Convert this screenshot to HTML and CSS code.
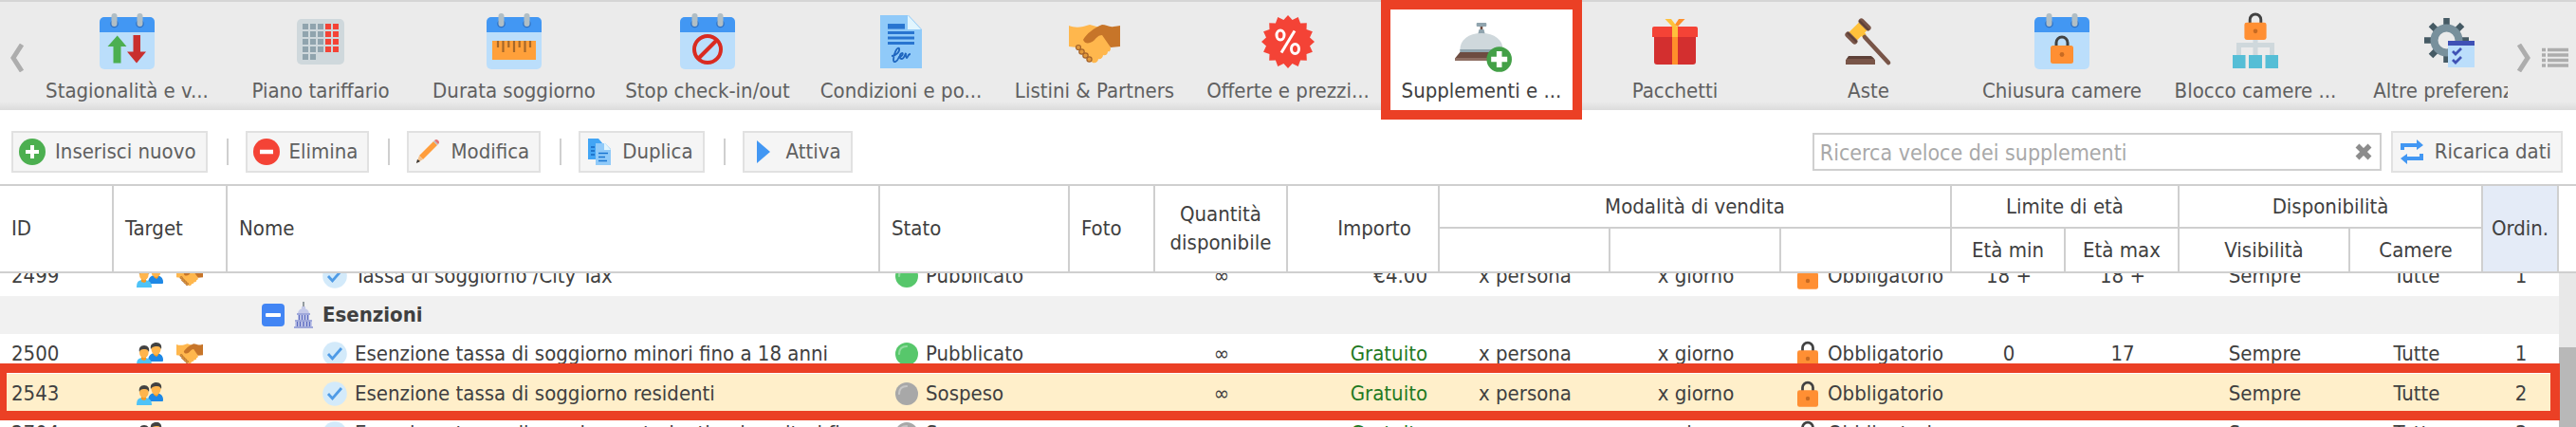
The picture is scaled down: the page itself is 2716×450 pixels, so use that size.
FILE: index.html
```
<!DOCTYPE html>
<html lang="it">

<head>
    <meta charset="utf-8" />
    <title>Supplementi e tasse</title>
    <link rel="stylesheet" href="styles.css">
</head>

<body>
    <!-- icone condivise -->
    <svg class="sprite" aria-hidden="true">
        <symbol id="i-calendar" viewBox="0 0 64 64">
            <rect x="3" y="6" width="58" height="55" rx="5" fill="#bbdefb" />
            <path d="M3 22V11a5 5 0 0 1 5-5h48a5 5 0 0 1 5 5v11z" fill="#4297f3" />
            <circle cx="18.500" cy="13" r="4.300" fill="#2f72c4" />
            <circle cx="45.500" cy="13" r="4.300" fill="#2f72c4" />
            <rect x="15.500" y="2" width="6" height="14" rx="3" fill="#b0bec5" />
            <rect x="42.500" y="2" width="6" height="14" rx="3" fill="#b0bec5" />
        </symbol>
        <symbol id="i-lock" viewBox="0 0 24 30">
            <path d="M6 13V8a6 6 0 0 1 12 0v5" fill="none" stroke="#424242" stroke-width="3" />
            <rect x="0" y="11" width="24" height="19" rx="2.500" fill="#ff8f33" />
            <circle cx="12" cy="20.500" r="2.400" fill="#c76a22" />
        </symbol>
        <symbol id="i-hands" viewBox="0 0 54 41">
            <path d="M0 1c5 2 10 2 15 1l7-2 18 5 4 20c0 3-2 4-3 3 0 4-3 5-5 4 0 3-3 5-5 4 0 3-3 5-6 4L8 24 0 23z" fill="#ffb74d" />
            <path d="M15 16C18 10 27 3 35 0c4 0 8 3 12 2 3 0 5-1 7-1v22l-10 1-9-13c-4 0-6 3-9 6-4 3-9 4-11-1z" fill="#c77529" />
            <g fill="#e39a3b" stroke="#a5632a" stroke-width="1.200">
                <circle cx="10" cy="24" r="2.500" />
                <circle cx="13.500" cy="28.500" r="2.700" />
                <circle cx="17.500" cy="32.500" r="2.700" />
                <circle cx="21.500" cy="36.500" r="2.600" />
            </g>
        </symbol>
        <symbol id="i-people" viewBox="0 0 28 24">
            <path d="M12 20c0-6 3-9 8-9 5 0 8 3 8 7v1c0 1-1 1-2 1z" fill="#1e88e5" />
            <path d="M18 10h5v3l-2 2-3-2z" fill="#f59a23" />
            <ellipse cx="20.500" cy="7" rx="5" ry="6" fill="#ffb54d" />
            <path d="M15 7c-1-5 2-7 6-7 4 0 6 3 5 7-1-2-2-3-4-3-3 0-5 0-7 3z" fill="#424242" />
            <path d="M0 24c0-6 2-8 7-8 6 0 9 2 9 8z" fill="#4fc3f7" />
            <path d="M5 14h5v4l-2 1-3-1z" fill="#f59a23" />
            <ellipse cx="7.800" cy="10.500" rx="4.800" ry="5.800" fill="#ffb54d" />
            <path d="M3 10c-1-4 1-7 5-7 4 0 6 3 5 7-1-2-2-3-4-3-3 0-5 0-6 3z" fill="#424242" />
        </symbol>
        <symbol id="i-check" viewBox="0 0 26 26">
            <circle cx="13" cy="13" r="12.800" fill="#d3eafa" />
            <path d="M6 13l4.500 5L20 7" fill="none" stroke="#4f9be6" stroke-width="2.800" />
        </symbol>
        <symbol id="i-ball" viewBox="0 0 24 24">
            <circle cx="12" cy="12" r="12" fill="currentColor" />
            <path d="M4 12c0-5 3-8 8-8" fill="none" stroke="#fff" stroke-opacity=".35" stroke-width="2.200" stroke-linecap="round" />
        </symbol>
    </svg>

    <nav class="tabs">
        <button class="tabs-arrow tabs-prev" aria-label="Indietro">
            <svg width="16" height="30" viewBox="0 0 16 30"><path d="M13 1L4 15l9 14" fill="none" stroke="#adadad" stroke-width="5" /></svg>
        </button>
        <div class="tabs-list">
            <a class="tab" href="#">
                <svg class="tab-icon" viewBox="0 0 64 64">
                    <use href="#i-calendar" />
                    <path d="M21.700 25.500L31.500 37h-6v17.500h-8V37h-6z" fill="#4caf50" />
                    <path d="M38.500 25H46v17.500h6L42 54.500l-10-12h6.500z" fill="#c92f2f" />
                </svg>
                <span>Stagionalità e v...</span>
            </a>
            <a class="tab" href="#">
                <svg class="tab-icon" viewBox="0 0 64 64">
                    <rect x="7" y="8" width="50" height="48" rx="5" fill="#cfd8dc" />
                    <path d="M13 16h24M13 24h24M13 32h24M13 40h24M13 48h14" stroke="#90a4ae" stroke-width="6" stroke-dasharray="6 2" />
                    <path d="M37 16h14M37 24h14M37 32h14M37 40h14" stroke="#f44336" stroke-width="6" stroke-dasharray="6 2" />
                </svg>
                <span>Piano tariffario</span>
            </a>
            <a class="tab" href="#">
                <svg class="tab-icon" viewBox="0 0 64 64">
                    <use href="#i-calendar" />
                    <rect x="9" y="31" width="46" height="20" fill="#ffa03a" />
                    <path d="M15 31v7M26.300 31v7M37.700 31v7M49 31v7M20.500 31v12M32 31v12M43.500 31v12" stroke="#a5682a" stroke-width="2.200" />
                </svg>
                <span>Durata soggiorno</span>
            </a>
            <a class="tab" href="#">
                <svg class="tab-icon" viewBox="0 0 64 64">
                    <use href="#i-calendar" />
                    <circle cx="32" cy="40" r="14" fill="none" stroke="#d92b21" stroke-width="4" />
                    <path d="M22 50l20-20" stroke="#d92b21" stroke-width="4" />
                </svg>
                <span>Stop check-in/out</span>
            </a>
            <a class="tab" href="#">
                <svg class="tab-icon" viewBox="0 0 64 64">
                    <path d="M10 4h30l14 15v41H10z" fill="#90caf9" />
                    <path d="M39 4l14 15H39z" fill="#e1f5fe" />
                    <path d="M18 15.800h18" stroke="#2874d0" stroke-width="5.500" />
                    <path d="M18 22.500h28M18 28h28M18 33.500h28" stroke="#2874d0" stroke-width="2.800" />
                    <path d="M22 47c5 0 9-5 8-8-2-2-6 6-6 12 0 4 4 2 6-3 3 0 5-4 3-4-3 1-3 6 0 6 2 0 3-4 4-6 0 3 0 5 1 5s1-4 4-4" fill="none" stroke="#1f66bf" stroke-width="1.800" />
                </svg>
                <span>Condizioni e po...</span>
            </a>
            <a class="tab" href="#">
                <svg class="tab-icon" viewBox="0 0 64 64"><use href="#i-hands" x="5" y="14" width="54" height="41" /></svg>
                <span>Listini &amp; Partners</span>
            </a>
            <a class="tab" href="#">
                <svg class="tab-icon" viewBox="0 0 64 64">
                    <path fill="#f44336" d="M32 4L36.600 9 42.700 6.100 45.100 12.500 51.800 12.200 51.500 18.900 57.900 21.300 55 27.400 60 32 55 36.600 57.900 42.700 51.500 45.100 51.800 51.800 45.100 51.500 42.700 57.900 36.600 55 32 60 27.400 55 21.300 57.900 18.900 51.500 12.200 51.800 12.500 45.100 6.100 42.700 9 36.600 4 32 9 27.400 6.100 21.300 12.500 18.900 12.200 12.200 18.900 12.500 21.300 6.100 27.400 9z" />
                    <ellipse cx="24" cy="25" rx="4" ry="5" fill="none" stroke="#fff" stroke-width="3" />
                    <ellipse cx="39.500" cy="39.500" rx="4" ry="5" fill="none" stroke="#fff" stroke-width="3" />
                    <path d="M39 20.500L25 43.500" stroke="#fff" stroke-width="3" />
                </svg>
                <span>Offerte e prezzi...</span>
            </a>
            <a class="tab active" href="#">
                <svg class="tab-icon" viewBox="0 0 64 64">
                    <rect x="26.700" y="12" width="10.600" height="4" rx="1" fill="#90a4ae" />
                    <path d="M30.700 16h2.600v4h-2.600z" fill="#6d4c41" />
                    <path d="M29.500 19h5l1.500 6h-8z" fill="#90a4ae" />
                    <path d="M9.300 41C9.300 30 18 23 32 23s22.700 7 22.700 18z" fill="#cfd8dc" />
                    <path d="M9.300 40h45v3h-45z" fill="#90a4ae" />
                    <path d="M9.300 43h45l5.700 6.500H4z" fill="#6d4c41" />
                    <path d="M4 49h56v3H4z" fill="#8d6e63" />
                    <circle cx="50.700" cy="50.500" r="13.300" fill="#43a047" />
                    <path d="M50.700 42v17M42.200 50.500h17" stroke="#fff" stroke-width="5.600" />
                </svg>
                <span>Supplementi e ...</span>
            </a>
            <a class="tab" href="#">
                <svg class="tab-icon" viewBox="0 0 64 64">
                    <path d="M21.500 8H28l6 8h-5z" fill="#ffc13b" />
                    <path d="M42.500 8H36l-4 6 3 2z" fill="#ff8f2b" />
                    <path d="M10 27h44v26a3 3 0 0 1-3 3H13a3 3 0 0 1-3-3z" fill="#d32f2f" />
                    <path d="M8 27V18a2 2 0 0 1 2-2h44a2 2 0 0 1 2 2v9z" fill="#f44336" />
                    <path d="M29 16h6v11h-6z" fill="#ffc13b" />
                    <path d="M29 27h6v29h-6z" fill="#ff8f2b" />
                </svg>
                <span>Pacchetti</span>
            </a>
            <a class="tab" href="#">
                <svg class="tab-icon" viewBox="0 0 64 64">
                    <path d="M8 56v-5l3-3h25l3 3v5z" fill="#795548" />
                    <path d="M11 47h24l3 3H9z" fill="#5d4037" />
                    <path d="M24 22l4 4" stroke="#ffc13b" stroke-width="5" />
                    <path d="M28 27l25 27" stroke="#795548" stroke-width="4.600" stroke-linecap="round" />
                    <g transform="rotate(45 21 21)">
                        <rect x="15" y="12" width="12" height="18" fill="#ffc13b" />
                        <rect x="13" y="8" width="16" height="6" rx="3" fill="#795548" />
                        <rect x="13" y="28" width="16" height="6" rx="3" fill="#795548" />
                        <path d="M14 12h14M14 30h14" stroke="#5d4037" stroke-width="2" />
                    </g>
                </svg>
                <span>Aste</span>
            </a>
            <a class="tab" href="#">
                <svg class="tab-icon" viewBox="0 0 64 64">
                    <use href="#i-calendar" />
                    <use href="#i-lock" x="20" y="25" width="24" height="30" />
                </svg>
                <span>Chiusura camere</span>
            </a>
            <a class="tab" href="#">
                <svg class="tab-icon" viewBox="0 0 64 64">
                    <path d="M32 28v20M14.500 48V35.500h35V48" fill="none" stroke="#cfd8dc" stroke-width="5" />
                    <path d="M8 46h13.500v14H8zM25 46h14v14H25zM42.500 46H56v14H42.500z" fill="#55bed6" />
                    <use href="#i-lock" x="20" y="1" width="24" height="29" />
                </svg>
                <span>Blocco camere ...</span>
            </a>
            <a class="tab" href="#">
                <svg class="tab-icon" viewBox="0 0 64 64">
                    <g stroke="#455a64" stroke-width="6.500">
                        <path d="M29.500 7v47M6 30.500h47M13 14l33 33M46 14L13 47" />
                    </g>
                    <circle cx="29.500" cy="30.500" r="13" fill="#ebebeb" stroke="#78909c" stroke-width="8" />
                    <path d="M31 31h28v28H31z" fill="#bbdefb" />
                    <path d="M31 31h28v5H31z" fill="#3f51b5" />
                    <path d="M36 42l3 3 6-6M36 51l3 3 6-6" fill="none" stroke="#3f51b5" stroke-width="2.800" />
                </svg>
                <span>Altre preferenze</span>
            </a>
        </div>
        <button class="tabs-arrow" aria-label="Avanti">
            <svg width="16" height="30" viewBox="0 0 16 30"><path d="M3 1l9 14-9 14" fill="none" stroke="#adadad" stroke-width="5" /></svg>
        </button>
        <button class="tabs-arrow tabs-menu" aria-label="Elenco">
            <svg width="28" height="22" viewBox="0 0 28 22"><path d="M0 2.500h4m2 0h22M0 8h4m2 0h22M0 13.500h4m2 0h22M0 19h4m2 0h22" stroke="#adadad" stroke-width="3.600" /></svg>
        </button>
    </nav>

    <div class="toolbar">
        <button class="btn">
            <svg width="28" height="28" viewBox="0 0 28 28"><circle cx="14" cy="14" r="14" fill="#4caf50" /><path d="M14 7v14M7 14h14" stroke="#fff" stroke-width="4" /></svg>
            Inserisci nuovo
        </button>
        <span class="sep"></span>
        <button class="btn">
            <svg width="28" height="28" viewBox="0 0 28 28"><circle cx="14" cy="14" r="14" fill="#f44336" /><path d="M7 14h14" stroke="#fff" stroke-width="4.500" /></svg>
            Elimina
        </button>
        <span class="sep"></span>
        <button class="btn">
            <svg width="28" height="28" viewBox="0 0 28 28"><path d="M5 18L20 3l4 4L9 22z" fill="#ff9d3b" /><path d="M20 3l1-1 4 4-1 1z" fill="#b0bec5" /><path d="M21 2q2-2 4 0t0 4z" fill="#e57373" /><path d="M5 18l4 4-7 4z" fill="#f3c08a" /><path d="M2 26l1-4 3 2z" fill="#333" /></svg>
            Modifica
        </button>
        <span class="sep"></span>
        <button class="btn">
            <svg width="28" height="28" viewBox="0 0 28 28"><path d="M2 0h11l5 6v16H2z" fill="#42a5f5" /><path d="M5 9h4M5 13h4M5 17h4" stroke="#1565c0" stroke-width="1.500" /><path d="M10 5h10l6 6v17H10z" fill="#90caf9" /><path d="M19 4v8h7z" fill="#e1f5fe" /><path d="M13 15.500h10M13 19.500h7M13 23.500h9" stroke="#1976d2" stroke-width="1.600" /></svg>
            Duplica
        </button>
        <span class="sep"></span>
        <button class="btn">
            <svg width="28" height="28" viewBox="0 0 28 28"><path d="M7 2l14 12L7 26z" fill="#4297f3" /></svg>
            Attiva
        </button>
        <div class="search">
            <input type="text" class="search-text" aria-label="Ricerca veloce dei supplementi" placeholder="Ricerca veloce dei supplementi" />
            <button class="search-clear" aria-label="Cancella">
                <svg width="18" height="18" viewBox="0 0 18 18"><path d="M2.500 2.500l13 13M15.500 2.500l-13 13" stroke="#8c8c8c" stroke-width="5.500" /></svg>
            </button>
        </div>
        <button class="btn">
            <svg width="28" height="28" viewBox="0 0 28 28"><path d="M4 12V7h15M24 16v5H9" fill="none" stroke="#4297f3" stroke-width="4" /><path d="M19 1l7 6-7 5zM9 16l-7 5 7 6z" fill="#4297f3" /></svg>
            Ricarica dati
        </button>
    </div>

    <div class="grid">
        <table class="grid-head">
            <colgroup>
                <col class="w120"><col class="w120"><col><col class="w200"><col class="w90"><col class="w140"><col class="w160"><col class="w180"><col class="w180"><col class="w180"><col class="w120"><col class="w120"><col class="w180"><col class="w140"><col class="w80">
            </colgroup>
            <tr>
                <th rowspan="2" class="left">ID</th>
                <th rowspan="2" class="left">Target</th>
                <th rowspan="2" class="left">Nome</th>
                <th rowspan="2" class="left">Stato</th>
                <th rowspan="2" class="left">Foto</th>
                <th rowspan="2">Quantità disponibile</th>
                <th rowspan="2" class="amount">Importo</th>
                <th colspan="3">Modalità di vendita</th>
                <th colspan="2">Limite di età</th>
                <th colspan="2">Disponibilità</th>
                <th rowspan="2" class="sorted">Ordin.</th>
            </tr>
            <tr>
                <th></th>
                <th></th>
                <th></th>
                <th>Età min</th>
                <th>Età max</th>
                <th>Visibilità</th>
                <th>Camere</th>
            </tr>
        </table>
        <div class="grid-body">
            <table class="grid-rows">
                <colgroup>
                    <col class="w120"><col class="w120"><col><col class="w200"><col class="w90"><col class="w140"><col class="w160"><col class="w180"><col class="w180"><col class="w180"><col class="w120"><col class="w120"><col class="w180"><col class="w140"><col class="w80">
                </colgroup>
                <tr>
                    <td class="left">2499</td>
                    <td><div class="target"><svg><use href="#i-people" /></svg><svg><use href="#i-hands" /></svg></div></td>
                    <td><div class="name"><svg><use href="#i-check" /></svg>Tassa di soggiorno /City Tax</div></td>
                    <td><div class="state on"><svg><use href="#i-ball" /></svg><span>Pubblicato</span></div></td>
                    <td></td>
                    <td>∞</td>
                    <td class="right">€4.00</td>
                    <td>x persona</td>
                    <td>x giorno</td>
                    <td><div class="lock"><svg><use href="#i-lock" /></svg>Obbligatorio</div></td>
                    <td>18 +</td>
                    <td>18 +</td>
                    <td>Sempre</td>
                    <td>Tutte</td>
                    <td>1</td>
                </tr>
                <tr class="group">
                    <td></td>
                    <td></td>
                    <td colspan="13">
                        <div class="group-name">
                            <button class="toggle" aria-label="Comprimi"></button>
                            <svg width="20" height="28" viewBox="0 0 20 28">
                                <path d="M9.500 0h1v6h-1z" fill="#37474f" />
                                <path d="M8 5h4v3H8zM4 13c0-4 3-6 6-6s6 2 6 6z" fill="#c5cae9" />
                                <path d="M4 13h12v7H4z" fill="#c5cae9" />
                                <path d="M5.500 14v5M8.500 14v5M11.500 14v5M14.500 14v5" stroke="#5c6bc0" stroke-width="1.200" />
                                <path d="M1 20h18v7H1z" fill="#c5cae9" />
                                <path d="M3.500 21v5M6.500 21v5M10 21v5M13.500 21v5M16.500 21v5" stroke="#5c6bc0" stroke-width="1.400" />
                                <path d="M0 27h20M1 20h18M3 13h14" stroke="#9fa8da" stroke-width="2" />
                            </svg>
                            Esenzioni
                        </div>
                    </td>
                </tr>
                <tr>
                    <td class="left">2500</td>
                    <td><div class="target"><svg><use href="#i-people" /></svg><svg><use href="#i-hands" /></svg></div></td>
                    <td><div class="name"><svg><use href="#i-check" /></svg>Esenzione tassa di soggiorno minori fino a 18 anni</div></td>
                    <td><div class="state on"><svg><use href="#i-ball" /></svg><span>Pubblicato</span></div></td>
                    <td></td>
                    <td>∞</td>
                    <td class="right free">Gratuito</td>
                    <td>x persona</td>
                    <td>x giorno</td>
                    <td><div class="lock"><svg><use href="#i-lock" /></svg>Obbligatorio</div></td>
                    <td>0</td>
                    <td>17</td>
                    <td>Sempre</td>
                    <td>Tutte</td>
                    <td>1</td>
                </tr>
                <tr class="selected">
                    <td class="left">2543<span class="frame"></span></td>
                    <td><div class="target"><svg><use href="#i-people" /></svg></div></td>
                    <td><div class="name"><svg><use href="#i-check" /></svg>Esenzione tassa di soggiorno residenti</div></td>
                    <td><div class="state"><svg><use href="#i-ball" /></svg><span>Sospeso</span></div></td>
                    <td></td>
                    <td>∞</td>
                    <td class="right free">Gratuito</td>
                    <td>x persona</td>
                    <td>x giorno</td>
                    <td><div class="lock"><svg><use href="#i-lock" /></svg>Obbligatorio</div></td>
                    <td></td>
                    <td></td>
                    <td>Sempre</td>
                    <td>Tutte</td>
                    <td>2</td>
                </tr>
                <tr>
                    <td class="left">2704</td>
                    <td><div class="target"><svg><use href="#i-people" /></svg></div></td>
                    <td><div class="name"><svg><use href="#i-check" /></svg>Esenzione tassa di soggiorno studenti universitari fino</div></td>
                    <td><div class="state"><svg><use href="#i-ball" /></svg><span>Sospeso</span></div></td>
                    <td></td>
                    <td>∞</td>
                    <td class="right free">Gratuito</td>
                    <td>x persona</td>
                    <td>x giorno</td>
                    <td><div class="lock"><svg><use href="#i-lock" /></svg>Obbligatorio</div></td>
                    <td></td>
                    <td></td>
                    <td>Sempre</td>
                    <td>Tutte</td>
                    <td>3</td>
                </tr>
            </table>
            <div class="scroll"><div class="scroll-thumb"></div></div>
        </div>
    </div>
</body>

</html>
```
FILE: styles.css
```
* {
    box-sizing: border-box;
}

body {
    margin: 0;
    height: 100vh;
    display: flex;
    flex-direction: column;
    overflow: hidden;
    background: #fff;
    color: #404040;
    font-family: "DejaVu Sans Condensed", "DejaVu Sans", Tahoma, sans-serif;
    font-size: 22px;
    line-height: 28px;
}

button,
input {
    font: inherit;
    color: inherit;
}

svg {
    display: block;
    flex: none;
}

.sprite {
    position: absolute;
    width: 0;
    height: 0;
}

/* schede */
.tabs {
    display: flex;
    flex: none;
    border-top: 2px solid #d5d5d5;
    background: linear-gradient(#ebebeb, #ebebeb 92%, #dcdcdc);
}

.tabs-list {
    display: flex;
    flex: 1;
    min-width: 0;
    overflow: hidden;
}

.tab {
    flex: none;
    width: 204px;
    padding: 10px 6px 6px;
    display: flex;
    flex-direction: column;
    align-items: center;
    gap: 6px;
    color: #606060;
    text-decoration: none;
    white-space: nowrap;
}

.tab-icon {
    width: 64px;
    height: 64px;
}

.tab.active {
    background: #fff;
    color: #404040;
}

/* riquadro rosso intorno alla scheda attiva */
.tab.active::after {
    content: "";
    position: fixed;
    box-sizing: border-box;
    width: 212px;
    height: 126px;
    margin-top: -12px;
    border: 10px solid #eb4025;
}

.tabs-arrow {
    width: 32px;
    padding: 4px 0 0 2px;
    display: flex;
    align-items: center;
    justify-content: center;
    border: 0;
    background: none;
}

.tabs-prev {
    padding-left: 4px;
}

.tabs-menu {
    width: 40px;
    padding: 4px 4px 0 0;
}

/* barra dei comandi */
.toolbar {
    flex: none;
    height: 78px;
    padding: 10px 14px 0 12px;
    display: flex;
    align-items: center;
}

.btn {
    height: 44px;
    padding: 0 10px 0 6px;
    display: flex;
    align-items: center;
    gap: 10px;
    border: 2px solid #e1e1e1;
    background: #f5f5f5;
    color: #606060;
    white-space: nowrap;
}

.sep {
    width: 2px;
    height: 28px;
    margin: 0 18px 0 20px;
    background: #cfcfcf;
}

.search {
    width: 600px;
    height: 40px;
    margin-left: auto;
    margin-right: 10px;
    display: flex;
    align-items: center;
    border: 2px solid #cfcfcf;
    background: #fff;
}

.search-text {
    flex: 1;
    min-width: 0;
    height: 36px;
    padding: 2px 6px 0;
    border: 0;
    outline: none;
    background: none;
    font-size: 23px;
}

.search-text::placeholder {
    color: #a9a9a9;
}

.search-clear {
    width: 32px;
    padding: 0 6px;
    border: 0;
    background: none;
}

/* tabella */
.grid {
    flex: 1;
    min-height: 0;
    display: flex;
    flex-direction: column;
    border-top: 2px solid #cfcfcf;
}

.grid table {
    width: 100%;
    table-layout: fixed;
    border-collapse: separate;
    border-spacing: 0;
}

.grid-head {
    flex: none;
    padding-right: 18px;
    border-bottom: 2px solid #cfcfcf;
}

.grid-head tr {
    height: 45px;
}

.grid-head th {
    padding: 0 12px;
    border-right: 2px solid #cfcfcf;
    border-bottom: 2px solid #cfcfcf;
    font-weight: normal;
    line-height: 30px;
}

.grid-head th[rowspan],
.grid-head tr + tr th {
    border-bottom: 0;
}

.grid-head th.amount {
    padding-right: 28px;
    text-align: right;
}

.grid-head th.sorted {
    padding: 0;
    background: #e4ebf7;
}

.grid .left {
    padding-left: 12px;
    text-align: left;
}

.w80 { width: 80px; }
.w90 { width: 90px; }
.w120 { width: 120px; }
.w140 { width: 140px; }
.w160 { width: 160px; }
.w180 { width: 180px; }
.w200 { width: 200px; }

.grid-body {
    flex: 1;
    min-height: 0;
    display: flex;
    align-items: flex-start;
    overflow: hidden;
}

/* righe scorse di mezza riga */
.grid-rows {
    margin-top: -18px;
}

.grid-rows tr {
    height: 42px;
}

.grid-rows td {
    padding: 0;
    text-align: center;
    white-space: nowrap;
}

.grid-rows .right {
    padding-right: 13px;
    text-align: right;
}

.free {
    color: #1f7a1f;
}

.grid-rows tr.group {
    height: 40px;
    background: #f1f1f1;
    font-weight: bold;
}

.grid-rows td > div {
    display: flex;
    align-items: center;
}

.target {
    gap: 14px;
    padding-left: 24px;
}

.target svg {
    width: 28px;
    height: 24px;
}

.name {
    gap: 8px;
    padding-left: 100px;
}

.name svg {
    width: 26px;
    height: 26px;
}

.state {
    gap: 8px;
    padding-left: 16px;
}

.state svg {
    width: 24px;
    height: 24px;
    color: #a8a8a8;
}

.state.on svg {
    color: #57c76b;
}

.lock {
    gap: 10px;
    padding-left: 17px;
}

.lock svg {
    width: 22px;
    height: 28px;
}

.group-name {
    gap: 10px;
    padding-left: 36px;
}

.toggle {
    width: 24px;
    height: 24px;
    padding: 0 4px;
    border: 0;
    border-radius: 4px;
    background: #4285f4;
}

.toggle::before {
    content: "";
    display: block;
    height: 4px;
    border-radius: 1px;
    background: #fff;
}

.selected {
    position: relative;
    background: #ffefca;
}

/* riquadro rosso intorno alla riga selezionata */
.frame {
    position: absolute;
    top: -11px;
    right: -1px;
    bottom: -7px;
    left: -3px;
    border: 10px solid #eb4025;
}

.scroll {
    flex: none;
    width: 18px;
    align-self: stretch;
    padding-top: 78px;
    background: #e8e8e8;
}

.scroll-thumb {
    height: 100%;
    background: #b8b8b8;
}
```
